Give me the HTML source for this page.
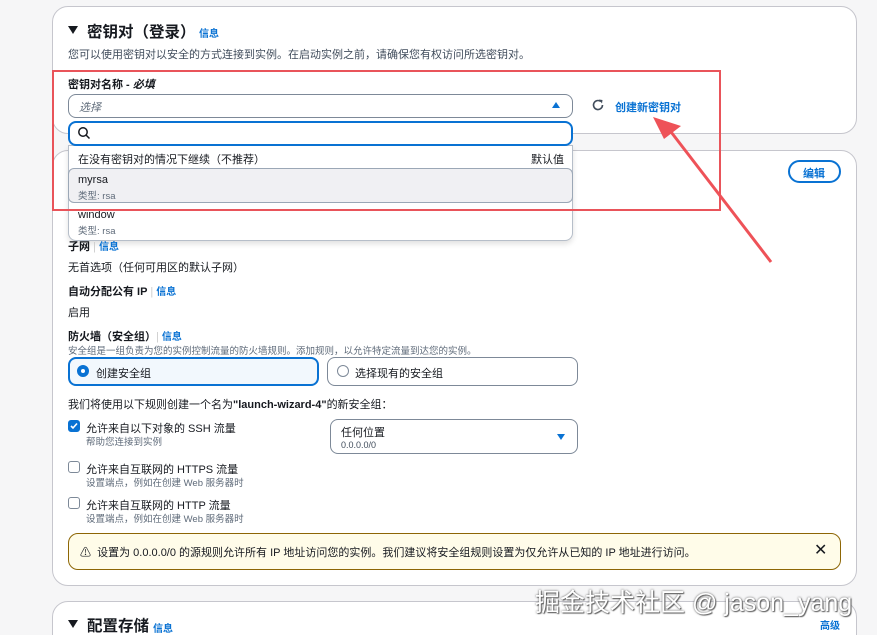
<!DOCTYPE html>
<html><head><meta charset="utf-8"><style>
*{box-sizing:border-box;margin:0;padding:0}
html,body{width:877px;height:635px;overflow:hidden}
body{background:#f6f6f7;font-family:"Liberation Sans","Noto Sans CJK SC",sans-serif;color:#16191f;position:relative}
.a{position:absolute;white-space:nowrap}
.card{position:absolute;left:52px;width:805px;background:#fff;border:1px solid #c6c6cd;border-radius:16px}
.info{color:#0972d3;font-size:10px;font-weight:bold}
.s11{font-size:11px}.s10{font-size:9.5px;color:#5f6b7a}
.h{font-size:15.5px;font-weight:bold}
.tri{position:absolute;width:0;height:0;border-left:5px solid transparent;border-right:5px solid transparent;border-top:8px solid #16191f}
.cb{position:absolute;width:12px;height:12px;border:1px solid #7d8998;border-radius:3px;background:#fff}
</style></head><body>
<div class="card" style="top:6px;height:128px"></div>
<div class="card" style="top:150px;height:436px"></div>
<div class="card" style="top:601px;height:60px"></div>

<div class="tri" style="left:68px;top:26px"></div>
<div class="a h" style="left:87px;top:20px">密钥对（登录）</div>
<div class="a info" style="left:199px;top:25px">信息</div>
<div class="a s11" style="left:68px;top:46px;color:#414d5c">您可以使用密钥对以安全的方式连接到实例。在启动实例之前，请确保您有权访问所选密钥对。</div>
<div class="a s11" style="left:68px;top:76px;font-weight:bold">密钥对名称 - <i>必填</i></div>
<div class="a" style="left:68px;top:94px;width:505px;height:24px;border:1px solid #7d8998;border-radius:8px"></div>
<div class="a s11" style="left:79px;top:99px;color:#5f6b7a;font-style:italic">选择</div>
<div class="a" style="left:552px;top:102px;width:0;height:0;border-left:4px solid transparent;border-right:4px solid transparent;border-bottom:6px solid #0972d3"></div>
<svg class="a" style="left:591px;top:98px" width="14" height="14" viewBox="0 0 14 14"><path d="M11.5 7A4.5 4.5 0 1 1 9.8 3.5" fill="none" stroke="#414d5c" stroke-width="1.6"/><path d="M8 1.5L11.5 2 11 5.5z" fill="#414d5c"/></svg>
<div class="a s11" style="left:615px;top:99px;color:#0972d3;font-weight:bold">创建新密钥对</div>

<div class="a" style="left:68px;top:145px;width:505px;height:96px;background:#fff;border:1px solid #b6bec9;border-radius:0 0 8px 8px;box-shadow:0 3px 6px rgba(0,0,0,.12)"></div>
<div class="a" style="left:68px;top:121px;width:505px;height:25px;border:2px solid #0972d3;border-radius:8px;background:#fff"></div>
<svg class="a" style="left:77px;top:126px" width="14" height="14" viewBox="0 0 14 14"><circle cx="6" cy="6" r="4.2" fill="none" stroke="#16191f" stroke-width="1.5"/><path d="M9 9l3.5 3.5" stroke="#16191f" stroke-width="1.5"/></svg>
<div class="a s11" style="left:78px;top:151px">在没有密钥对的情况下继续（不推荐）</div>
<div class="a s11" style="left:531px;top:151px">默认值</div>
<div class="a" style="left:68px;top:168px;width:505px;height:35px;background:#f0f0f3;border:1px solid #9ba7b6;border-radius:6px"></div>
<div class="a s11" style="left:78px;top:174px">myrsa</div>
<div class="a s10" style="left:78px;top:188px">类型: rsa</div>
<div class="a s11" style="left:78px;top:209px">window</div>
<div class="a s10" style="left:78px;top:223px">类型: rsa</div>

<div class="a" style="left:52px;top:70px;width:669px;height:141px;border:2px solid #e9545a"></div>
<svg class="a" style="left:0;top:0" width="877" height="635"><path d="M771 262L668 128" stroke="#ee5258" stroke-width="3"/><path d="M653 117L681 126 664 139z" fill="#ee5258"/></svg>

<div class="a" style="left:788px;top:160px;width:53px;height:23px;border:2px solid #0972d3;border-radius:12px"></div>
<div class="a s11" style="left:803px;top:165px;color:#0972d3;font-weight:bold">编辑</div>

<div class="a s11" style="left:68px;top:238px;font-weight:bold">子网 <span style="color:#ccc;font-weight:normal">|</span> <span class="info">信息</span></div>
<div class="a s11" style="left:68px;top:259px">无首选项（任何可用区的默认子网）</div>
<div class="a s11" style="left:68px;top:283px;font-weight:bold">自动分配公有 IP <span style="color:#ccc;font-weight:normal">|</span> <span class="info">信息</span></div>
<div class="a s11" style="left:68px;top:304px">启用</div>
<div class="a s11" style="left:68px;top:328px;font-weight:bold">防火墙（安全组）<span style="color:#ccc;font-weight:normal">|</span> <span class="info">信息</span></div>
<div class="a s10" style="left:68px;top:343px">安全组是一组负责为您的实例控制流量的防火墙规则。添加规则，以允许特定流量到达您的实例。</div>
<div class="a" style="left:68px;top:357px;width:251px;height:29px;border:2px solid #0972d3;border-radius:8px;background:#f2f8fd"></div>
<div class="a" style="left:77px;top:365px;width:12px;height:12px;border:4px solid #0972d3;border-radius:50%;background:#fff"></div>
<div class="a s11" style="left:96px;top:365px">创建安全组</div>
<div class="a" style="left:327px;top:357px;width:251px;height:29px;border:1px solid #7d8998;border-radius:8px"></div>
<div class="a" style="left:337px;top:365px;width:12px;height:12px;border:1px solid #7d8998;border-radius:50%"></div>
<div class="a s11" style="left:355px;top:365px">选择现有的安全组</div>
<div class="a s11" style="left:68px;top:396px">我们将使用以下规则创建一个名为<b>"launch-wizard-4"</b>的新安全组：</div>

<div class="cb" style="left:68px;top:420px;background:#0972d3;border-color:#0972d3"></div>
<svg class="a" style="left:68px;top:420px" width="12" height="12"><path d="M3 6l2 2 4-4.5" fill="none" stroke="#fff" stroke-width="1.6"/></svg>
<div class="a s11" style="left:86px;top:420px">允许来自以下对象的 SSH 流量</div>
<div class="a s10" style="left:86px;top:434px">帮助您连接到实例</div>
<div class="cb" style="left:68px;top:461px"></div>
<div class="a s11" style="left:86px;top:461px">允许来自互联网的 HTTPS 流量</div>
<div class="a s10" style="left:86px;top:475px">设置端点，例如在创建 Web 服务器时</div>
<div class="cb" style="left:68px;top:497px"></div>
<div class="a s11" style="left:86px;top:497px">允许来自互联网的 HTTP 流量</div>
<div class="a s10" style="left:86px;top:511px">设置端点，例如在创建 Web 服务器时</div>

<div class="a" style="left:330px;top:419px;width:248px;height:35px;border:1px solid #7d8998;border-radius:8px"></div>
<div class="a s11" style="left:341px;top:424px">任何位置</div>
<div class="a" style="left:341px;top:440px;font-size:9px;color:#414d5c">0.0.0.0/0</div>
<div class="a" style="left:557px;top:434px;width:0;height:0;border-left:4px solid transparent;border-right:4px solid transparent;border-top:6px solid #0972d3"></div>

<div class="a" style="left:68px;top:533px;width:773px;height:37px;background:#fffce9;border:1px solid #8d6605;border-radius:10px"></div>
<div class="a s11" style="left:80px;top:544px">⚠&nbsp; 设置为 0.0.0.0/0 的源规则允许所有 IP 地址访问您的实例。我们建议将安全组规则设置为仅允许从已知的 IP 地址进行访问。</div>
<div class="a" style="left:814px;top:540px;font-size:16px">✕</div>

<div class="tri" style="left:68px;top:620px"></div>
<div class="a h" style="left:87px;top:614px">配置存储</div>
<div class="a info" style="left:153px;top:620px">信息</div>
<div class="a info" style="left:820px;top:617px">高级</div>
<div class="a" style="left:535px;top:583px;font-size:25px;color:#fff;text-shadow:0 0 2px #555,1px 1px 1px #666">掘金技术社区 @ jason_yang</div>
</body></html>
